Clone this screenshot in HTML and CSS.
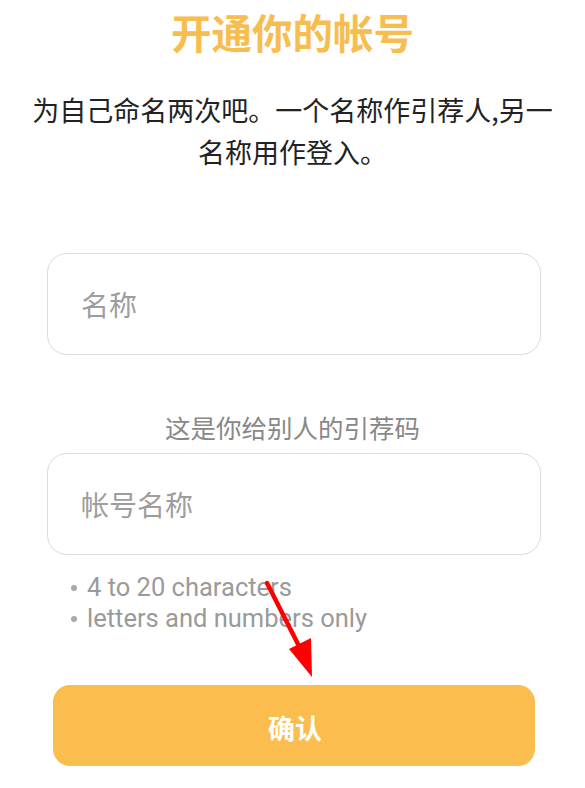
FILE: index.html
```html
<!DOCTYPE html>
<html lang="zh">
<head>
<meta charset="utf-8">
<link rel="stylesheet" href="styles.css">
</head>
<body>
<main class="page">
  <h1 class="title">开通你的帐号</h1>
  <p class="intro">为自己命名两次吧。一个名称作引荐人,另一<br>名称用作登入。</p>
  <div class="field field-first"><span class="placeholder">名称</span></div>
  <p class="label">这是你给别人的引荐码</p>
  <div class="field"><span class="placeholder">帐号名称</span></div>
  <ul class="hints">
    <li>4 to 20 characters</li>
    <li>letters and numbers only</li>
  </ul>
  <button class="confirm">确认</button>
  <svg class="arrow" width="585" height="788" viewBox="0 0 585 788">
    <line x1="267" y1="583" x2="302" y2="652" stroke="#ff0000" stroke-width="4.5" stroke-linecap="round"/>
    <polygon points="312,677 289,649 311,638" fill="#ff0000"/>
  </svg>
</main>
</body>
</html>
```
FILE: styles.css
```css
html, body {
  margin: 0;
  padding: 0;
  background: #ffffff;
}
.page {
  position: relative;
  width: 585px;
  height: 788px;
  display: flex;
  flex-direction: column;
  font-family: "Noto Sans CJK SC", "Noto Sans", sans-serif;
}
.title {
  margin: 0;
  padding-top: 10px;
  text-align: center;
  font-size: 40.5px;
  line-height: 44px;
  font-weight: 700;
  color: #f8bd4f;
}
.intro {
  margin: 35px 0 0;
  text-align: center;
  font-size: 27px;
  line-height: 42px;
  color: #222222;
}
.field {
  margin: 0 44px 0 47px;
  height: 102px;
  box-sizing: border-box;
  border: 1.5px solid #dcdcdc;
  border-radius: 20px;
  display: flex;
  align-items: center;
  padding-left: 33px;
}
.field-first {
  margin-top: 80px;
}
.placeholder {
  font-size: 28px;
  color: #9d9d9d;
}
.label {
  margin: 54px 0 8px;
  text-align: center;
  font-size: 25.5px;
  line-height: 36px;
  color: #888888;
}
.hints {
  list-style: none;
  margin: 17px 0 0 71px;
  padding: 0;
  font-family: Roboto, "Noto Sans", sans-serif;
  font-size: 25.5px;
  line-height: 31px;
  color: #9a9a9a;
}
.hints li {
  display: flex;
  align-items: center;
}
.hints li::before {
  content: "";
  width: 6px;
  height: 6px;
  border-radius: 50%;
  background: #a8a8a8;
  margin-right: 10px;
  flex: none;
}
.confirm {
  margin: 51px 50px 0 53px;
  height: 81px;
  border: none;
  border-radius: 17px;
  background: #fbbe4e;
  color: #ffffff;
  font-family: "Noto Sans CJK SC", sans-serif;
  font-size: 27px;
  font-weight: 700;
  padding: 0 0 0 2px;
  line-height: 1;
  padding-top: 4px;
}
.arrow {
  position: absolute;
  left: 0;
  top: 0;
  pointer-events: none;
}
```
